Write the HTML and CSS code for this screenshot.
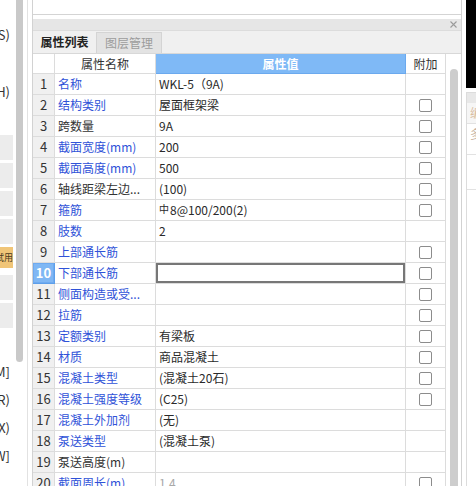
FILE: index.html
```html
<!DOCTYPE html>
<html lang="zh-CN">
<head>
<meta charset="utf-8">
<title>属性列表</title>
<link rel="stylesheet" href="styles.css">
</head>
<body>
<div class="app">
  <div class="left">
    <div class="left-content">
      <div class="lbl lbl-s">(S)</div>
      <div class="lbl lbl-h">(H)</div>
      <div class="lbtn lbtn-first"></div>
      <div class="lbtn"></div>
      <div class="lbtn"></div>
      <div class="lbtn"></div>
      <div class="lbtn lbtn-try">试用</div>
      <div class="lbtn"></div>
      <div class="lbtn"></div>
      <div class="lbl lbl-m">(M]</div>
      <div class="lbl lbl-next">(R)</div>
      <div class="lbl lbl-next">(X)</div>
      <div class="lbl lbl-next">(W]</div>
    </div>
    <div class="left-scroll"><div class="left-thumb"></div></div>
    <div class="left-rule"></div>
    <div class="left-gap"></div>
  </div>

  <div class="main">
    <div class="topbox"></div>
    <div class="topgap"></div>
    <div class="titlebar">
      <svg class="close" width="7" height="7" viewBox="0 0 7 7"><path d="M0.5 0.5 L6.5 6.5 M6.5 0.5 L0.5 6.5" stroke="#9a9a9a" stroke-width="1.1" fill="none"/></svg>
    </div>
    <div class="tabs">
      <div class="tab tab-active">属性列表</div>
      <div class="tab tab-off">图层管理</div>
    </div>
    <div class="grid-wrap">
      <div class="grid">
        <div class="row head">
          <div class="c num head-num"></div>
          <div class="c name head-name">属性名称</div>
          <div class="c val head-val">属性值</div>
          <div class="c add head-add">附加</div>
        </div>
        <div class="row"><div class="c num">1</div><div class="c name blue">名称</div><div class="c val">WKL-5（9A)</div><div class="c add"></div></div>
        <div class="row"><div class="c num">2</div><div class="c name blue">结构类别</div><div class="c val">屋面框架梁</div><div class="c add"><span class="cb"></span></div></div>
        <div class="row"><div class="c num">3</div><div class="c name">跨数量</div><div class="c val">9A</div><div class="c add"><span class="cb"></span></div></div>
        <div class="row"><div class="c num">4</div><div class="c name blue">截面宽度(mm)</div><div class="c val">200</div><div class="c add"><span class="cb"></span></div></div>
        <div class="row"><div class="c num">5</div><div class="c name blue">截面高度(mm)</div><div class="c val">500</div><div class="c add"><span class="cb"></span></div></div>
        <div class="row"><div class="c num">6</div><div class="c name">轴线距梁左边...</div><div class="c val">(100)</div><div class="c add"><span class="cb"></span></div></div>
        <div class="row"><div class="c num">7</div><div class="c name blue">箍筋</div><div class="c val"><span class="steel">中</span>8@100/200(2)</div><div class="c add"><span class="cb"></span></div></div>
        <div class="row"><div class="c num">8</div><div class="c name blue">肢数</div><div class="c val">2</div><div class="c add"></div></div>
        <div class="row"><div class="c num">9</div><div class="c name blue">上部通长筋</div><div class="c val"></div><div class="c add"><span class="cb"></span></div></div>
        <div class="row"><div class="c num num-sel">10</div><div class="c name blue">下部通长筋</div><div class="c val val-sel"></div><div class="c add"><span class="cb"></span></div></div>
        <div class="row"><div class="c num">11</div><div class="c name blue">侧面构造或受...</div><div class="c val"></div><div class="c add"><span class="cb"></span></div></div>
        <div class="row"><div class="c num">12</div><div class="c name blue">拉筋</div><div class="c val"></div><div class="c add"><span class="cb"></span></div></div>
        <div class="row"><div class="c num">13</div><div class="c name blue">定额类别</div><div class="c val">有梁板</div><div class="c add"><span class="cb"></span></div></div>
        <div class="row"><div class="c num">14</div><div class="c name blue">材质</div><div class="c val">商品混凝土</div><div class="c add"><span class="cb"></span></div></div>
        <div class="row"><div class="c num">15</div><div class="c name blue">混凝土类型</div><div class="c val">(混凝土20石)</div><div class="c add"><span class="cb"></span></div></div>
        <div class="row"><div class="c num">16</div><div class="c name blue">混凝土强度等级</div><div class="c val">(C25)</div><div class="c add"><span class="cb"></span></div></div>
        <div class="row"><div class="c num">17</div><div class="c name blue">混凝土外加剂</div><div class="c val">(无)</div><div class="c add"></div></div>
        <div class="row"><div class="c num">18</div><div class="c name blue">泵送类型</div><div class="c val">(混凝土泵)</div><div class="c add"></div></div>
        <div class="row"><div class="c num">19</div><div class="c name">泵送高度(m)</div><div class="c val"></div><div class="c add"></div></div>
        <div class="row"><div class="c num">20</div><div class="c name blue">截面周长(m)</div><div class="c val muted">1.4</div><div class="c add"><span class="cb"></span></div></div>
      </div>
      <div class="vscroll"><div class="vthumb"></div></div>
    </div>
  </div>

  <div class="right">
    <div class="right-black"></div>
    <div class="right-panel">
      <div class="rp-head"></div>
      <div class="rp-row rp-row1">编</div>
      <div class="rp-row rp-row2">多</div>
      <div class="rp-row rp-row3"></div>
    </div>
  </div>
</div>
</body>
</html>
```

FILE: styles.css
```css
* {
  box-sizing: border-box;
  margin: 0;
  padding: 0;
}

html,
body {
  width: 476px;
  height: 486px;
  overflow: hidden;
  background: #ffffff;
}

body {
  font-family: "Noto Sans CJK SC", "Noto Sans", sans-serif;
  font-size: 12px;
  color: #333333;
}

.app {
  display: flex;
  height: 486px;
}

/* ---------- left strip ---------- */
.left {
  width: 32px;
  flex-shrink: 0;
  display: flex;
}

.left-content {
  width: 16px;
  overflow: hidden;
  display: flex;
  flex-direction: column;
}

.lbl {
  height: 16px;
  line-height: 16px;
  font-size: 13px;
  white-space: nowrap;
  display: flex;
  justify-content: flex-end;
  padding-right: 6px;
  color: #333333;
}

.lbl-s { margin-top: 27px; }
.lbl-h { margin-top: 41px; }
.lbl-m { margin-top: 36px; }
.lbl-next { margin-top: 12px; }

.lbtn {
  width: 13px;
  height: 25px;
  margin-top: 3px;
  background: #ececec;
}

.lbtn-first { margin-top: 35px; }

.lbtn-try {
  height: 21px;
  margin-bottom: 4px;
  background: #f0c578;
  color: #4a3a20;
  font-size: 9px;
  line-height: 21px;
  white-space: nowrap;
  display: flex;
  justify-content: flex-end;
  overflow: hidden;
}

.left-scroll {
  width: 11px;
}

.left-thumb {
  width: 7px;
  height: 362px;
  background: #c9c9c9;
  border-radius: 0 0 4px 4px;
}

.left-rule {
  width: 1px;
  background: #e2e2e2;
}

.left-gap {
  width: 4px;
}

/* ---------- main panel ---------- */
.main {
  width: 430px;
  flex-shrink: 0;
  border-left: 1px solid #d2d2d2;
  border-right: 1px solid #d2d2d2;
  display: flex;
  flex-direction: column;
  overflow: hidden;
}

.topbox {
  height: 15px;
  border-bottom: 1px solid #d4d4d4;
}

.topgap {
  height: 4px;
}

.titlebar {
  height: 11px;
  background: #e6e6e6;
  display: flex;
  justify-content: flex-end;
  align-items: center;
  padding-right: 4px;
}

.tabs {
  height: 24px;
  background: #f0f0f0;
  border-top: 1px solid #dcdcdc;
  border-bottom: 1px solid #d8d8d8;
  display: flex;
  align-items: flex-end;
}

.tab {
  height: 21px;
  line-height: 20px;
  font-size: 12px;
  text-align: center;
}

.tab-active {
  width: 64px;
  font-weight: bold;
  color: #222222;
  background: #f0f0f0;
  border-right: 1px solid #d4d4d4;
}

.tab-off {
  width: 65px;
  color: #9c9c9c;
  background: #e3e3e3;
  border-top: 1px solid #d4d4d4;
  border-right: 1px solid #d4d4d4;
}

.grid-wrap {
  flex: 1;
  display: flex;
  min-height: 0;
}

.grid {
  width: 413px;
  display: flex;
  flex-direction: column;
}

.row {
  display: grid;
  grid-template-columns: 22px 101px 250px 40px;
  height: 21px;
  flex-shrink: 0;
}

.row.head {
  height: 20px;
}

.c {
  border-right: 1px solid #dcdcdc;
  border-bottom: 1px solid #dcdcdc;
  line-height: 20px;
  white-space: nowrap;
  overflow: hidden;
}

.head .c {
  line-height: 19px;
}

.num {
  background: #f0f0f0;
  text-align: center;
  font-size: 13px;
  color: #333333;
}

.head-num {
  background: #ffffff;
}

.name {
  padding-left: 3px;
  color: #333333;
}

.blue {
  color: #2f52d8;
}

.head-name {
  padding-left: 0;
  text-align: center;
  color: #333333;
}

.val {
  padding-left: 3px;
  color: #2a2a2a;
}

.head-val {
  background: #7fb9f6;
  border-right-color: #6ba9ee;
  border-bottom-color: #6ba9ee;
  color: #ffffff;
  font-weight: bold;
  text-align: center;
  padding-left: 0;
}

.head-add {
  text-align: center;
  color: #333333;
}

.muted {
  color: #a8a8a8;
}

.steel {
  font-size: 10px;
  position: relative;
  top: -2px;
  margin-right: 1px;
}

.num-sel {
  background: #7fb7f4;
  border-right-color: #5d9fea;
  border-bottom-color: #5d9fea;
  box-shadow: inset 0 0 0 1px #6eaaf0;
  color: #ffffff;
  font-weight: bold;
}

.val-sel {
  box-shadow: inset 0 0 0 2px #777777;
}

.add {
  display: flex;
  justify-content: center;
  align-items: center;
}

.cb {
  display: block;
  width: 13px;
  height: 13px;
  border: 1px solid #8c8c8c;
  border-radius: 2px;
  background: #ffffff;
}

.vscroll {
  width: 15px;
  padding-left: 4px;
  padding-top: 15px;
}

.vthumb {
  width: 8px;
  height: 420px;
  background: #cdcdcd;
  border-radius: 4px;
}

/* ---------- right strip ---------- */
.right {
  width: 14px;
  flex-shrink: 0;
  padding-left: 4px;
  display: flex;
  flex-direction: column;
}

.right-black {
  height: 88px;
  background: #000000;
}

.right-panel {
  margin-top: 4px;
  flex: 1;
  border-left: 1px solid #dcdcdc;
  border-top: 1px solid #dcdcdc;
  overflow: hidden;
}

.rp-head {
  height: 10px;
  background: #e8e8e8;
}

.rp-row {
  font-size: 12px;
  line-height: 20px;
  color: #d9bc9e;
  padding-left: 3px;
  white-space: nowrap;
  border-bottom: 1px solid #e2e2e2;
}

.rp-row1 {
  height: 21px;
  background: #f6f6f6;
}

.rp-row2 {
  height: 31px;
  color: #c8b3a0;
}

.rp-row3 {
  height: 35px;
}
```
